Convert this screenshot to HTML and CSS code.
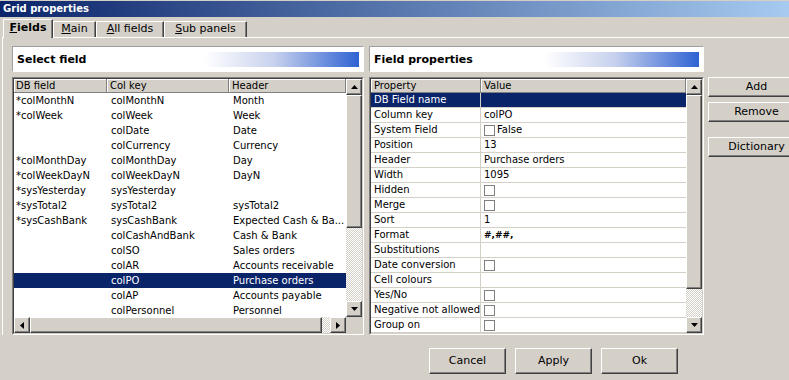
FILE: index.html
```html
<!DOCTYPE html>
<html>
<head>
<meta charset="utf-8">
<link rel="stylesheet" href="styles.css">
</head>
<body>
<div class="titlebar">Grid properties</div>
<div class="tabs">
  <div class="tab active tab-fields"><u>F</u>ields</div>
  <div class="tab tab-main"><u>M</u>ain</div>
  <div class="tab tab-all"><u>A</u>ll fields</div>
  <div class="tab tab-sub"><u>S</u>ub panels</div>
</div>
<div class="pane">
  <div class="columns">
    <div class="col col-left">
      <div class="sechead"><span>Select field</span><div class="grad"></div></div>
      <div class="grid">
        <div class="grid-in grid-left">
          <div class="list">
            <div class="hrow lcols">
              <div class="hc">DB field</div><div class="hc">Col key</div><div class="hc">Header</div>
            </div>
            <div class="row lcols"><div>*colMonthN</div><div>colMonthN</div><div>Month</div></div>
            <div class="row lcols"><div>*colWeek</div><div>colWeek</div><div>Week</div></div>
            <div class="row lcols"><div></div><div>colDate</div><div>Date</div></div>
            <div class="row lcols"><div></div><div>colCurrency</div><div>Currency</div></div>
            <div class="row lcols"><div>*colMonthDay</div><div>colMonthDay</div><div>Day</div></div>
            <div class="row lcols"><div>*colWeekDayN</div><div>colWeekDayN</div><div>DayN</div></div>
            <div class="row lcols"><div>*sysYesterday</div><div>sysYesterday</div><div></div></div>
            <div class="row lcols"><div>*sysTotal2</div><div>sysTotal2</div><div>sysTotal2</div></div>
            <div class="row lcols"><div>*sysCashBank</div><div>sysCashBank</div><div>Expected Cash &amp; Ba...</div></div>
            <div class="row lcols"><div></div><div>colCashAndBank</div><div>Cash &amp; Bank</div></div>
            <div class="row lcols"><div></div><div>colSO</div><div>Sales orders</div></div>
            <div class="row lcols"><div></div><div>colAR</div><div>Accounts receivable</div></div>
            <div class="row lcols sel"><div></div><div>colPO</div><div>Purchase orders</div></div>
            <div class="row lcols"><div></div><div>colAP</div><div>Accounts payable</div></div>
            <div class="row lcols"><div></div><div>colPersonnel</div><div>Personnel</div></div>
          </div>
          <div class="vscroll">
            <div class="sbtn"><svg width="7" height="4" viewBox="0 0 7 4"><polygon points="3.5,0 7,4 0,4" fill="#000"/></svg></div>
            <div class="thumb thumb-l"></div>
            <div class="track"></div>
            <div class="sbtn"><svg width="7" height="4" viewBox="0 0 7 4"><polygon points="0,0 7,0 3.5,4" fill="#000"/></svg></div>
          </div>
          <div class="hscroll">
            <div class="sbtn"><svg width="4" height="7" viewBox="0 0 4 7"><polygon points="4,0 4,7 0,3.5" fill="#000"/></svg></div>
            <div class="hthumb"></div>
            <div class="track"></div>
            <div class="sbtn"><svg width="4" height="7" viewBox="0 0 4 7"><polygon points="0,0 4,3.5 0,7" fill="#000"/></svg></div>
          </div>
          <div class="corner"></div>
        </div>
      </div>
    </div>
    <div class="col col-right">
      <div class="sechead"><span>Field properties</span><div class="grad"></div></div>
      <div class="grid">
        <div class="grid-in grid-right">
          <div class="list">
            <div class="hrow rcols">
              <div class="hc">Property</div><div class="hc">Value</div>
            </div>
            <div class="prow rcols sel"><div>DB Field name</div><div></div></div>
            <div class="prow rcols"><div>Column key</div><div>colPO</div></div>
            <div class="prow rcols"><div>System Field</div><div><span class="cb"></span>False</div></div>
            <div class="prow rcols"><div>Position</div><div>13</div></div>
            <div class="prow rcols"><div>Header</div><div>Purchase orders</div></div>
            <div class="prow rcols"><div>Width</div><div>1095</div></div>
            <div class="prow rcols"><div>Hidden</div><div><span class="cb"></span></div></div>
            <div class="prow rcols"><div>Merge</div><div><span class="cb"></span></div></div>
            <div class="prow rcols"><div>Sort</div><div>1</div></div>
            <div class="prow rcols"><div>Format</div><div class="fmt">#,##,</div></div>
            <div class="prow rcols"><div>Substitutions</div><div></div></div>
            <div class="prow rcols"><div>Date conversion</div><div><span class="cb"></span></div></div>
            <div class="prow rcols"><div>Cell colours</div><div></div></div>
            <div class="prow rcols"><div>Yes/No</div><div><span class="cb"></span></div></div>
            <div class="prow rcols"><div>Negative not allowed</div><div><span class="cb"></span></div></div>
            <div class="prow rcols"><div>Group on</div><div><span class="cb"></span></div></div>
          </div>
          <div class="vscroll">
            <div class="sbtn"><svg width="7" height="4" viewBox="0 0 7 4"><polygon points="3.5,0 7,4 0,4" fill="#000"/></svg></div>
            <div class="thumb thumb-r"></div>
            <div class="track"></div>
            <div class="sbtn"><svg width="7" height="4" viewBox="0 0 7 4"><polygon points="0,0 7,0 3.5,4" fill="#000"/></svg></div>
          </div>
        </div>
      </div>
    </div>
    <div class="side">
      <div class="btn">Add</div>
      <div class="btn">Remove</div>
      <div class="btn btn-gap">Dictionary</div>
    </div>
  </div>
</div>
<div class="footer">
  <div class="btn fbtn">Cancel</div>
  <div class="btn fbtn">Apply</div>
  <div class="btn fbtn">Ok</div>
</div>
</body>
</html>
```
FILE: styles.css
```css
* { box-sizing: border-box; }
body {
  margin: 0;
  width: 789px;
  height: 380px;
  overflow: hidden;
  background: #d4d0c8;
  font-family: "DejaVu Sans", Verdana, sans-serif;
  font-size: 10px;
  color: #000;
}
.titlebar {
  height: 17px;
  border-top: 1px solid #d4d0c8;
  background: linear-gradient(to right, #0a246a, #a6caf0);
  color: #fff;
  font-weight: bold;
  font-size: 10px;
  line-height: 16px;
  padding-left: 3px;
}
.tabs {
  display: flex;
  align-items: flex-end;
  height: 20px;
  padding-left: 3px;
}
.tab {
  flex: none;
  height: 16px;
  font-size: 11px;
  line-height: 14px;
  text-align: center;
  border: 1px solid;
  border-color: #fff #404040 transparent #fff;
  border-bottom: none;
  box-shadow: inset -1px 0 #808080;
  background: #d4d0c8;
}
.tab u { text-decoration: underline; }
.tab.active {
  height: 19px;
  margin-bottom: -1px;
  padding-top: 1px;
  font-weight: bold;
  position: relative;
  z-index: 1;
}
.tab-fields { width: 50px; }
.tab-main { width: 43px; }
.tab-all { width: 68px; }
.tab-sub { width: 83px; }
.pane {
  margin-left: 2px;
  border-top: 1px solid #fff;
  border-left: 1px solid #fff;
  padding: 8px 0 0 9px;
}
.columns { display: flex; }
.col { display: flex; flex-direction: column; gap: 5px; flex: none; }
.col-left { width: 352px; margin-right: 5px; }
.col-right { width: 335px; margin-right: 4px; }
.sechead {
  height: 26px;
  background: #fff;
  border: 1px solid;
  border-color: #a0a0a0 #fff #fff #a0a0a0;
  display: flex;
  align-items: center;
  justify-content: space-between;
  padding: 0 4px;
  font-weight: bold;
  font-size: 11px;
}
.grad {
  width: 155px;
  height: 15px;
  background: linear-gradient(to right, #fff, #c8d2ee 45%, #2f62d2);
}
.grid {
  height: 258px;
  border: 1px solid;
  border-color: #808080 #fff #fff #808080;
}
.grid-in {
  height: 100%;
  border: 1px solid;
  border-color: #404040 #d4d0c8 #d4d0c8 #404040;
  background: #fff;
  display: grid;
}
.grid-left {
  grid-template-columns: 1fr 16px;
  grid-template-rows: 1fr 16px;
}
.grid-right {
  grid-template-columns: 1fr 16px;
  grid-template-rows: 1fr;
}
.list { overflow: hidden; white-space: nowrap; min-width: 0; }
.lcols { display: grid; grid-template-columns: 93px 122px 1fr; }
.rcols { display: grid; grid-template-columns: 110px 1fr; }
.hrow { height: 14px; }
.hc {
  background: #d4d0c8;
  border-right: 1px solid #808080;
  border-bottom: 1px solid #808080;
  box-shadow: inset 1px 1px #fff;
  line-height: 13px;
  padding-left: 3px;
  overflow: hidden;
}
.lcols .hc:first-child { padding-left: 2px; }
.row { height: 15px; line-height: 15px; }
.row > div { overflow: hidden; padding-left: 4px; }
.row > div:first-child { padding-left: 2px; }
.sel { background: #0a246a; color: #fff; }
.prow { height: 15px; }
.prow > div {
  border-bottom: 1px solid #d4d0c8;
  line-height: 14px;
  padding-left: 3px;
  overflow: hidden;
}
.prow > div:first-child { border-right: 1px solid #d4d0c8; }
.prow > div:last-child { padding-left: 3px; display: flex; align-items: center; }
.cb {
  display: inline-block;
  width: 11px;
  height: 11px;
  border: 1px solid #808080;
  background: #fff;
  margin-right: 2px;
}
.fmt { font-size: 9px; font-weight: bold; }
.vscroll, .hscroll {
  background: repeating-conic-gradient(#fff 0 25%, #d4d0c8 0 50%) 0 0 / 2px 2px;
}
.vscroll { display: flex; flex-direction: column; }
.hscroll { display: flex; }
.sbtn, .thumb, .hthumb {
  background: #d4d0c8;
  border: 1px solid;
  border-color: #fff #404040 #404040 #fff;
  box-shadow: inset -1px -1px #808080;
}
.sbtn {
  flex: none;
  width: 16px;
  height: 16px;
  display: flex;
  align-items: center;
  justify-content: center;
}
.track { flex: 1; }
.thumb-l { height: 133px; flex: none; }
.thumb-r { height: 194px; flex: none; }
.hthumb { width: 292px; flex: none; }
.corner { background: #d4d0c8; }
.side {
  flex: none;
  display: flex;
  flex-direction: column;
  gap: 5px;
  padding-top: 31px;
}
.btn {
  width: 97px;
  height: 20px;
  background: #d4d0c8;
  border: 1px solid;
  border-color: #fff #404040 #404040 #fff;
  box-shadow: inset -1px -1px #808080;
  font-size: 11px;
  line-height: 17px;
  text-align: center;
  flex: none;
}
.btn-gap { margin-top: 10px; }
.footer {
  display: flex;
  gap: 9px;
  margin-top: 13px;
  padding-left: 429px;
}
.fbtn { width: 77px; height: 26px; line-height: 23px; }
```
